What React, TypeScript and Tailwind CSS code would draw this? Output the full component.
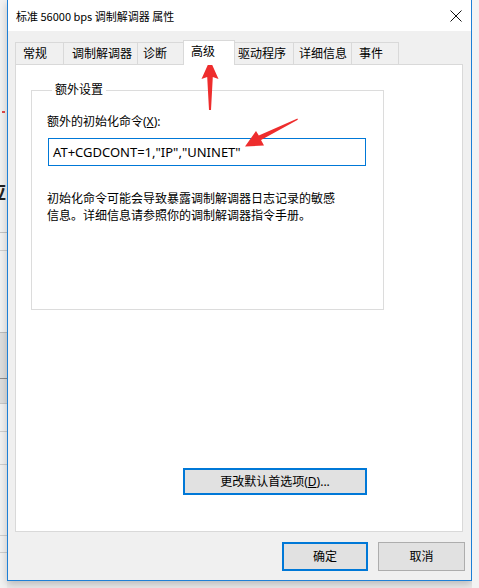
import React from "react";

// tab strip of the modem property sheet; widths + text inset read off the screenshot
const tabs = [
  { label: "常规", cls: "w-[48px] h-[22px] border-l pl-[7px]" },
  { label: "调制解调器", cls: "w-[74px] h-[22px] border-l pl-[8px]" },
  { label: "诊断", cls: "w-[46px] h-[22px] border-l pl-[5px]" },
  { label: "高级", cls: "w-[52px] h-[25px] -mb-[1px] border-x bg-white relative z-10 pl-[7px] pb-[3px]" },
  { label: "驱动程序", cls: "w-[58px] h-[22px] pl-[3px]" },
  { label: "详细信息", cls: "w-[58px] h-[22px] border-l pl-[5px]" },
  { label: "事件", cls: "w-[48px] h-[22px] border-x pl-[7px]" },
];

function BackdropStrip() {
  // sliver of the window behind the dialog
  return (
    <div className="flex flex-col w-[7px] h-full shrink-0 overflow-hidden bg-[#f2f2f2]">
      <div className="h-[111px] shrink-0" />
      <div className="h-[2px] w-[3px] ml-[2px] shrink-0 bg-[#e24a4a]" />
      <div className="h-[70px] shrink-0" />
      <div className="h-[18px] shrink-0 overflow-hidden">
        <span className="block -ml-[12px] text-[18px] leading-[18px] font-bold text-[#222]">应</span>
      </div>
      <div className="h-[31px] shrink-0" />
      <div className="h-[1px] shrink-0 bg-[#c4c4c4]" />
      <div className="h-[17px] shrink-0" />
      <div className="h-[1px] shrink-0 bg-[#cfcfcf]" />
      <div className="h-[81px] shrink-0" />
      <div className="h-[46px] shrink-0 bg-[#dedede] border-t border-[#bdbdbd]" />
      <div className="h-[1px] shrink-0 bg-[#8a8a8a]" />
      <div className="h-[25px] shrink-0 bg-[#dedede] border-b border-[#c8c8c8]" />
      <div className="h-[27px] shrink-0" />
      <div className="h-[1px] shrink-0 bg-[#cfcfcf]" />
      <div className="h-[32px] shrink-0" />
      <div className="h-[1px] shrink-0 bg-[#cfcfcf]" />
      <div className="h-[70px] shrink-0" />
      <div className="h-[1px] shrink-0 bg-[#cfcfcf]" />
      <div className="h-[16px] shrink-0" />
      <div className="h-[1px] shrink-0 bg-[#cfcfcf]" />
    </div>
  );
}

export default function App() {
  return (
    <div className="relative flex w-[479px] h-[588px] overflow-hidden bg-[#ebebeb] font-['Noto_Sans','Noto_Sans_CJK_SC',sans-serif] text-[12px] text-black">
      <BackdropStrip />

      <div className="flex flex-col w-[465px] h-[581px] shrink-0 border-x border-b border-[#1e7fd6] bg-[#f0f0f0] shadow-[0_3px_8px_rgba(0,0,0,0.22)]">
        {/* TITLE BAR */}
        <div className="flex items-center justify-between h-[31px] shrink-0 bg-white pl-[8px] pr-[9px]">
          <span className="font-['Noto_Sans_CJK_SC',sans-serif] text-[11px] leading-[16px]">标准 56000 bps 调制解调器 属性</span>
          <svg width="12" height="12" viewBox="0 0 12 12">
            <path d="M0.5 0.5 L11.5 11.5 M11.5 0.5 L0.5 11.5" stroke="#111" strokeWidth="1" />
          </svg>
        </div>

        <div className="flex flex-col pt-[9px] pl-[7px] pr-[6px]">
          {/* TABS */}
          <div className="flex items-end h-[24px]">
            {tabs.map((t) => (
              <div key={t.label} className={`flex items-center border-t border-[#d9d9d9] leading-[16px] ${t.cls}`}>
                {t.label}
              </div>
            ))}
          </div>

          {/* PANEL */}
          <div className="flex flex-col w-[448px] h-[468px] border border-[#d9d9d9] bg-white">
            <fieldset className="ml-[15px] mt-[17px] w-[353px] h-[228px] border border-[#dcdcdc] pl-[15px]">
              <legend className="ml-[5px] px-[3px] leading-[16px]">额外设置</legend>
              <div className="mt-[16px] leading-[16px]">
                额外的初始化命令(<u>X</u>):
              </div>
              <div className="mt-[8px] ml-[1px] w-[318px] h-[28px] border border-[#0078d7] pl-[4px] text-[13px] leading-[26px]">
                AT+CGDCONT=1,"IP","UNINET"
              </div>
              <div className="mt-[24px] leading-[17px]">
                <div>初始化命令可能会导致暴露调制解调器日志记录的敏感</div>
                <div>信息。详细信息请参照你的调制解调器指令手册。</div>
              </div>
            </fieldset>

            <div className="ml-[167px] mt-[158px] flex items-center justify-center w-[184px] h-[27px] border-2 border-[#0078d7] bg-[#e1e1e1] leading-[16px]">
              更改默认首选项(<u>D</u>)...
            </div>
          </div>

          {/* FOOTER */}
          <div className="flex justify-end gap-[10px] mt-[10px]">
            <div className="flex items-center justify-center w-[86px] h-[29px] border-2 border-[#0078d7] bg-[#e1e1e1] leading-[16px]">
              确定
            </div>
            <div className="flex items-center justify-center w-[87px] h-[29px] border border-[#adadad] bg-[#e1e1e1] leading-[16px]">
              取消
            </div>
          </div>
        </div>
      </div>

      <div className="flex-1 bg-[#f3f3f3]" />

      {/* annotation arrows drawn over the screenshot */}
      <svg className="absolute inset-0 pointer-events-none" width="479" height="588" viewBox="0 0 479 588">
        <polygon points="210,60 218.5,79 212.8,77 211,110 209,110 207.2,77 201.5,79" fill="#ee2d2d" />
        <polygon points="245,146.5 256,131 258.8,135.6 297.5,118.5 297.8,119.8 261,140 264,145.5" fill="#ee2d2d" />
      </svg>
    </div>
  );
}
